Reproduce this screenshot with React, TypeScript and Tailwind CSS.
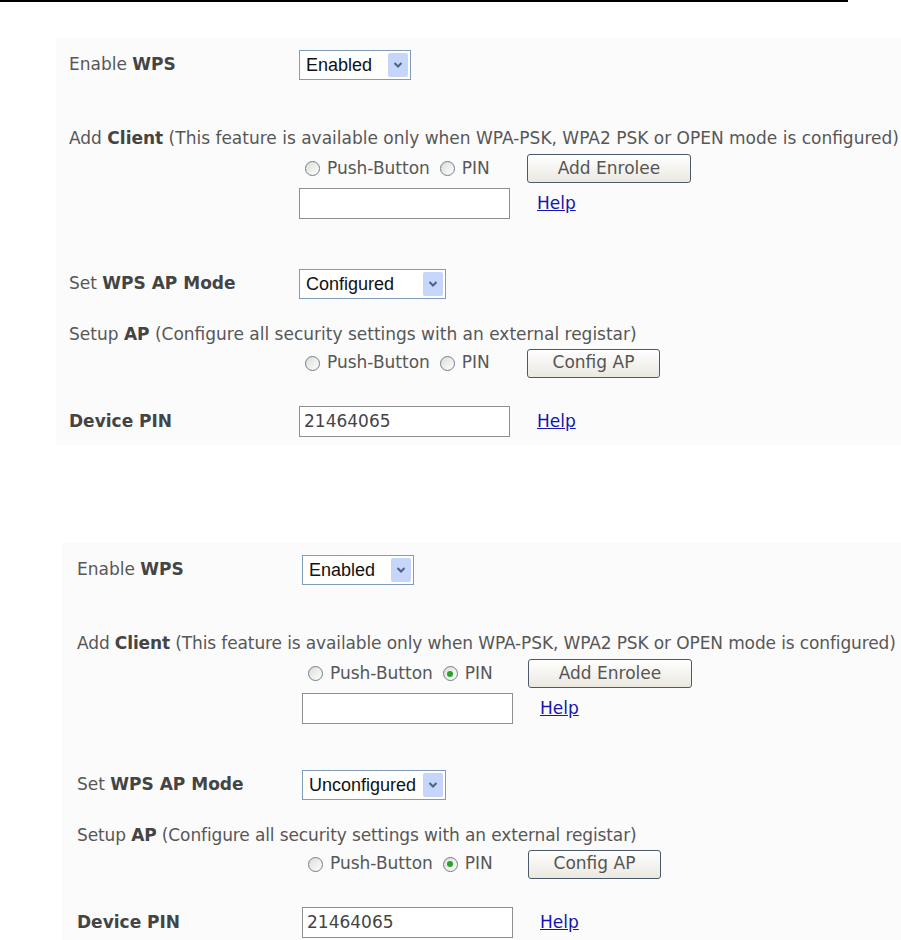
import { ReactNode } from 'react'

interface PanelProps {
  className: string
  labelWidth: string
  radioWidth: string
  lineClass: string
  enrolleeChecked: boolean
  apMode: string
  apModeWidth: string
  modeGap: string
}

const Label = ({ plain, bold }: { plain?: string; bold: string }) => (
  <span>
    {plain && <span>{plain} </span>}
    <span className="font-bold text-[#444]">{bold}</span>
  </span>
)

const Select = ({ value, width }: { value: string; width: string }) => (
  <div
    className={`flex h-[30px] items-center justify-between border border-[#7f9db9] bg-white pl-[6px] pr-[2px] ${width}`}
  >
    <span className="font-['Liberation_Sans',sans-serif] text-[18px] text-[#111]">
      {value}
    </span>
    <span className="flex h-[24px] w-[20px] items-center justify-center rounded-[2px] bg-[#c6d6fb]">
      <svg width="10" height="8" viewBox="0 0 10 8">
        <path d="M1.5 2 L5 5.5 L8.5 2" fill="none" stroke="#4d6185" strokeWidth="2" />
      </svg>
    </span>
  </div>
)

const Radio = ({ checked, label }: { checked?: boolean; label: string }) => (
  <span className="flex items-center">
    <span className="flex h-[15px] w-[15px] items-center justify-center rounded-full border border-[#6f7f8f] bg-gradient-to-br from-[#dcdcd6] to-white">
      {checked && <span className="h-[6px] w-[6px] rounded-full bg-[#29a329]" />}
    </span>
    <span className="ml-[7px]">{label}</span>
  </span>
)

const Button = ({ children, width }: { children: ReactNode; width: string }) => (
  <div
    className={`flex h-[29px] items-center justify-center rounded-[3px] border border-[#4b5a6a] bg-gradient-to-b from-white to-[#ebe8e0] text-[#555] ${width}`}
  >
    {children}
  </div>
)

const TextBox = ({ value }: { value?: string }) => (
  <div className="flex h-[31px] w-[211px] items-center border border-[#8f8f8f] bg-white px-[4px] text-[#444]">
    {value}
  </div>
)

const Help = () => <span className="text-[#1515b0] underline">Help</span>

const Panel = ({
  className,
  labelWidth,
  radioWidth,
  lineClass,
  enrolleeChecked,
  apMode,
  apModeWidth,
  modeGap,
}: PanelProps) => (
  <div className={`flex flex-col bg-[#fbfbfb] ${className}`}>
    <div className="mt-[12px] flex items-center">
      <div className={labelWidth}>
        <Label plain="Enable" bold="WPS" />
      </div>
      <Select value="Enabled" width="w-[112px]" />
    </div>

    <div className={`mt-[49px] leading-[18px] whitespace-nowrap ${lineClass}`}>
      Add <span className="font-bold text-[#444]">Client</span> (This feature is available only
      when WPA-PSK, WPA2 PSK or OPEN mode is configured)
    </div>

    <div className="mt-[7px] flex items-center">
      <div className={labelWidth} />
      <div className={`flex h-[28px] items-center gap-[10px] pl-[6px] ${radioWidth}`}>
        <Radio label="Push-Button" />
        <Radio label="PIN" checked={enrolleeChecked} />
      </div>
      <Button width="w-[164px]">Add Enrolee</Button>
    </div>

    <div className="mt-[5px] flex items-center">
      <div className={labelWidth} />
      <TextBox />
      <div className="ml-[27px]">
        <Help />
      </div>
    </div>

    <div className={`flex items-center ${modeGap}`}>
      <div className={labelWidth}>
        <Label plain="Set" bold="WPS AP Mode" />
      </div>
      <Select value={apMode} width={apModeWidth} />
    </div>

    <div className={`mt-[26px] leading-[18px] whitespace-nowrap ${lineClass}`}>
      Setup <span className="font-bold text-[#444]">AP</span> (Configure all security settings
      with an external registar)
    </div>

    <div className="mt-[5px] flex items-center">
      <div className={labelWidth} />
      <div className={`flex h-[30px] items-center gap-[10px] pl-[6px] ${radioWidth}`}>
        <Radio label="Push-Button" />
        <Radio label="PIN" checked={enrolleeChecked} />
      </div>
      <Button width="w-[133px]">Config AP</Button>
    </div>

    <div className="mt-[28px] flex items-center">
      <div className={labelWidth}>
        <Label bold="Device PIN" />
      </div>
      <TextBox value="21464065" />
      <div className="ml-[27px]">
        <Help />
      </div>
    </div>
  </div>
)

const App = () => (
  <div className="h-[940px] w-[901px] overflow-hidden bg-white font-['DejaVu_Sans',sans-serif] text-[17px] text-[#575757]">
    <div className="h-[2px] w-[848px] bg-black" />
    <Panel
      className="ml-[56px] mt-[36px] h-[407px] pl-[13px]"
      labelWidth="w-[230px] shrink-0"
      radioWidth="w-[228px] shrink-0"
      lineClass=""
      enrolleeChecked={false}
      apMode="Configured"
      apModeWidth="w-[147px]"
      modeGap="mt-[50px]"
    />
    <Panel
      className="ml-[62px] mt-[98px] h-[400px] pl-[15px]"
      labelWidth="w-[225px] shrink-0"
      radioWidth="w-[226px] shrink-0"
      lineClass="tracking-[-0.12px]"
      enrolleeChecked={true}
      apMode="Unconfigured"
      apModeWidth="w-[144px]"
      modeGap="mt-[46px]"
    />
  </div>
)

export default App
